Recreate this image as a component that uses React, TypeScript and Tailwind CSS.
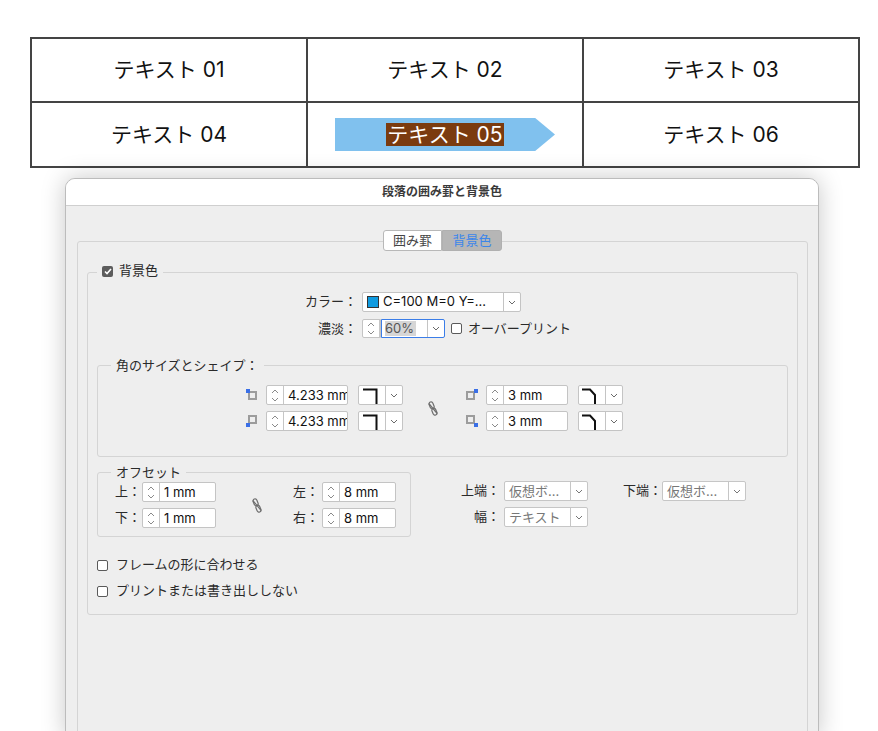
import React from 'react';

const ui = "font-['Inter','Noto_Sans_CJK_JP',sans-serif]";

function Chevron({ color = '#6a6a6a' }: { color?: string }) {
    return (
        <svg width="8" height="5" viewBox="0 0 8 5">
            <path d="M1 1l3 3 3-3" fill="none" stroke={color} strokeWidth="1" />
        </svg>
    );
}

function Spinner() {
    return (
        <div className="w-[17px] h-full shrink-0 border-r border-[#c6c6c6] flex flex-col items-center justify-center gap-[3px]">
            <svg width="8" height="5" viewBox="0 0 8 5">
                <path d="M1 4l3-3 3 3" fill="none" stroke="#8a8a8a" strokeWidth="1" />
            </svg>
            <svg width="8" height="5" viewBox="0 0 8 5">
                <path d="M1 1l3 3 3-3" fill="none" stroke="#8a8a8a" strokeWidth="1" />
            </svg>
        </div>
    );
}

function Check({ checked }: { checked?: boolean }) {
    if (checked) {
        return (
            <span className="w-[11px] h-[11px] shrink-0 rounded-[2px] bg-[#5c5c5c] flex items-center justify-center">
                <svg width="8" height="7" viewBox="0 0 8 7">
                    <path d="M1 3.5l2 2 4-4.5" fill="none" stroke="white" strokeWidth="1.6" />
                </svg>
            </span>
        );
    }
    return <span className="block w-[11px] h-[11px] shrink-0 rounded-[2px] border border-[#5a5a5a] bg-white" />;
}

function NumField({ value, w }: { value: string; w: string }) {
    return (
        <div className={`flex h-[20px] ${w} shrink-0 border border-[#c4c4c4] rounded-[2px] bg-white overflow-hidden`}>
            <Spinner />
            <div className="pl-[4px] text-[13px] leading-[18px] text-[#111] whitespace-nowrap overflow-hidden">{value}</div>
        </div>
    );
}

function Dropdown({ text, disabled }: { text: string; disabled?: boolean }) {
    return (
        <div className="flex h-[20px] w-[84px] shrink-0 border border-[#c6c6c6] rounded-[2px] bg-white">
            <div className={`flex-1 pl-[4px] text-[13px] leading-[18px] whitespace-nowrap overflow-hidden ${disabled ? 'text-[#777]' : 'text-[#111]'}`}>{text}</div>
            <div className="w-[17px] shrink-0 border-l border-[#c6c6c6] flex items-center justify-center">
                <Chevron color="#777" />
            </div>
        </div>
    );
}

function ShapeSelect({ bevel }: { bevel?: boolean }) {
    return (
        <div className="flex h-[20px] w-[45px] shrink-0 border border-[#c4c4c4] rounded-[2px] bg-white">
            <div className="w-[27px] border-r border-[#c4c4c4]">
                <svg width="27" height="18" viewBox="0 0 27 18">
                    {bevel ? (
                        <path d="M3 3.5H11L16 9V19" fill="none" stroke="#111" strokeWidth="2" />
                    ) : (
                        <path d="M4 3.5H17.5V19" fill="none" stroke="#111" strokeWidth="2" />
                    )}
                </svg>
            </div>
            <div className="flex-1 flex items-center justify-center">
                <Chevron />
            </div>
        </div>
    );
}

function CornerIcon({ corner }: { corner: 'tl' | 'bl' | 'tr' | 'br' }) {
    const gray = { tl: [3, 3], bl: [3, 1], tr: [1, 3], br: [1, 1] }[corner];
    const blue = { tl: [0, 0], bl: [0, 8], tr: [8, 0], br: [8, 8] }[corner];
    return (
        <svg width="12" height="12" viewBox="0 0 12 12" className="shrink-0">
            <rect x={gray[0]} y={gray[1]} width="7" height="7" fill="none" stroke="#9c9c9c" strokeWidth="2" />
            <rect x={blue[0]} y={blue[1]} width="4" height="4" fill="#3a6fe6" />
        </svg>
    );
}

function LinkBroken() {
    return (
        <svg width="10" height="15" viewBox="0 0 10 15" className="shrink-0">
            <g fill="none" stroke="#6e6e6e" strokeWidth="1.2">
                <rect x="1.6" y="0.8" width="4" height="7" rx="2" transform="rotate(-22 3.6 4.3)" />
                <rect x="4.4" y="7.2" width="4" height="7" rx="2" transform="rotate(-22 6.4 10.7)" />
                <path d="M0.8 2.5L9.2 12.5" />
            </g>
        </svg>
    );
}

function CornerRow({ icon, value, bevel }: { icon: 'tl' | 'bl' | 'tr' | 'br'; value: string; bevel?: boolean }) {
    return (
        <div className="flex items-center">
            <CornerIcon corner={icon} />
            <div className="ml-[8px]">
                <NumField value={value} w="w-[82px]" />
            </div>
            <div className="ml-[10px]">
                <ShapeSelect bevel={bevel} />
            </div>
        </div>
    );
}

function OffsetRow({ a, b }: { a: string; b: string }) {
    return (
        <div className="flex items-center h-[20px]">
            <span className="w-[27px]">{a}</span>
            <NumField value="1 mm" w="w-[74px]" />
            <span className="ml-[77px] w-[29px]">{b}</span>
            <NumField value="8 mm" w="w-[74px]" />
        </div>
    );
}

export default function App() {
    const cells = ['テキスト 01', 'テキスト 02', 'テキスト 03', 'テキスト 04', null, 'テキスト 06'];

    return (
        <div className={`w-[878px] h-[731px] overflow-hidden bg-white ${ui}`}>
            {/* table */}
            <div className="pt-[37px] pl-[30px]">
                <table className="border-collapse w-[830px] table-fixed">
                    <tbody>
                        {[0, 1].map((r) => (
                            <tr key={r} className={r === 0 ? 'h-[64px]' : 'h-[65px]'}>
                                {cells.slice(r * 3, r * 3 + 3).map((c, i) => (
                                    <td key={i} className="border-2 border-[#444] text-center text-[21px] text-[#111] p-0">
                                        {c ?? (
                                            <div className="mx-auto w-[220px] h-[33px] bg-[#80c1ee] [clip-path:polygon(0_0,91%_0,100%_50%,91%_100%,0_100%)] flex items-center justify-center">
                                                <span className="bg-[#7b3b0f] text-white leading-[23px] px-[1px]">テキスト 05</span>
                                            </div>
                                        )}
                                    </td>
                                ))}
                            </tr>
                        ))}
                    </tbody>
                </table>
            </div>

            {/* dialog */}
            <div className="ml-[65px] mt-[10px] w-[754px] h-[560px] rounded-t-[10px] border border-[#bcbcbc] bg-[#eeeeee] shadow-[0_0_24px_rgba(0,0,0,0.22)] overflow-hidden text-[13px] text-[#2a2a2a]">
                <div className="h-[27px] bg-white border-b border-[#cfcfcf] flex items-center justify-center text-[12px] font-bold text-[#3a3a3a]">
                    段落の囲み罫と背景色
                </div>
                <div className="pt-[35px] pl-[11px] pr-[10px]">
                    <div className="border border-[#d4d4d4] rounded-[3px] h-[600px]">
                        {/* tabs */}
                        <div className="-mt-[12px] flex justify-center">
                            <div className="flex h-[21px] text-[13px] leading-[19px]">
                                <div className="w-[59px] bg-white border border-[#b8b8b8] rounded-l-[3px] text-center text-[#444]">囲み罫</div>
                                <div className="w-[60px] bg-[#b6b6b6] border border-[#b0b0b0] rounded-r-[3px] text-center text-[#3d86ea]">背景色</div>
                            </div>
                        </div>

                        {/* background colour group */}
                        <div className="mt-[21px] mx-[9px] border border-[#d4d4d4] rounded-[3px] pb-[16px]">
                            <div className="-mt-[9px] ml-[9px] w-fit px-[5px] bg-[#eeeeee] flex items-center gap-[6px] h-[14px]">
                                <Check checked />
                                <span>背景色</span>
                            </div>

                            <div className="mt-[14px] flex items-center h-[20px]">
                                <span className="w-[274px] pr-[5px] text-right">カラー：</span>
                                <div className="flex h-[20px] w-[159px] border border-[#c4c4c4] rounded-[2px] bg-white">
                                    <div className="flex-1 flex items-center pl-[4px] gap-[4px] overflow-hidden">
                                        <span className="w-[12px] h-[12px] shrink-0 bg-[#109be0] border border-[#333]" />
                                        <span className="text-[13px] text-[#111] whitespace-nowrap">C=100 M=0 Y=...</span>
                                    </div>
                                    <div className="w-[17px] shrink-0 border-l border-[#c4c4c4] flex items-center justify-center">
                                        <Chevron />
                                    </div>
                                </div>
                            </div>

                            <div className="mt-[7px] flex items-center h-[19px]">
                                <span className="w-[274px] pr-[5px] text-right">濃淡：</span>
                                <div className="flex h-[19px] w-[19px] border border-[#c4c4c4] rounded-l-[2px] bg-white">
                                    <Spinner />
                                </div>
                                <div className="flex h-[19px] w-[64px] border border-[#3b7de8] rounded-r-[2px] bg-white">
                                    <div className="flex-1 flex items-center pl-[3px]">
                                        <span className="bg-[#d6d6d6] text-[#555] leading-[15px] pr-[2px]">60%</span>
                                    </div>
                                    <div className="w-[17px] border-l border-[#c4c4c4] flex items-center justify-center">
                                        <Chevron />
                                    </div>
                                </div>
                                <span className="ml-[6px]">
                                    <Check />
                                </span>
                                <span className="ml-[6px]">オーバープリント</span>
                            </div>

                            {/* corners */}
                            <div className="mt-[27px] mx-[9px] border border-[#d4d4d4] rounded-[3px] pb-[25px]">
                                <div className="-mt-[8px] ml-[13px] w-fit px-[5px] bg-[#eeeeee] h-[14px] leading-[14px]">角のサイズとシェイプ：</div>
                                <div className="mt-[13px] ml-[148px] flex items-center">
                                    <div className="flex flex-col gap-[6px]">
                                        <CornerRow icon="tl" value="4.233 mm" />
                                        <CornerRow icon="bl" value="4.233 mm" />
                                    </div>
                                    <div className="ml-[25px]">
                                        <LinkBroken />
                                    </div>
                                    <div className="ml-[28px] flex flex-col gap-[6px]">
                                        <CornerRow icon="tr" value="3 mm" bevel />
                                        <CornerRow icon="br" value="3 mm" bevel />
                                    </div>
                                </div>
                            </div>

                            {/* offsets */}
                            <div className="mt-[15px] flex">
                                <div className="ml-[9px] w-[314px] border border-[#d4d4d4] rounded-[3px] pb-[8px] relative">
                                    <div className="-mt-[8px] ml-[13px] w-fit px-[5px] bg-[#eeeeee] h-[14px] leading-[14px]">オフセット</div>
                                    <div className="mt-[3px] pl-[17px] flex flex-col gap-[6px]">
                                        <OffsetRow a="上：" b="左：" />
                                        <OffsetRow a="下：" b="右：" />
                                    </div>
                                    <div className="absolute left-[154px] top-[25px]">
                                        <LinkBroken />
                                    </div>
                                </div>
                                <div className="pt-[9px] flex flex-col gap-[6px]">
                                    <div className="flex items-center h-[20px]">
                                        <span className="ml-[49px] w-[40px] text-right whitespace-nowrap">上端：</span>
                                        <span className="ml-[4px]">
                                            <Dropdown text="仮想ボ..." disabled />
                                        </span>
                                        <span className="ml-[35px] w-[39px] whitespace-nowrap">下端：</span>
                                        <Dropdown text="仮想ボ..." disabled />
                                    </div>
                                    <div className="flex items-center h-[20px]">
                                        <span className="ml-[49px] w-[40px] text-right whitespace-nowrap">幅：</span>
                                        <span className="ml-[4px]">
                                            <Dropdown text="テキスト" disabled />
                                        </span>
                                    </div>
                                </div>
                            </div>

                            <div className="mt-[21px] ml-[9px] flex items-center gap-[8px] h-[14px]">
                                <Check />
                                <span>フレームの形に合わせる</span>
                            </div>
                            <div className="mt-[12px] ml-[9px] flex items-center gap-[8px] h-[14px]">
                                <Check />
                                <span>プリントまたは書き出ししない</span>
                            </div>
                        </div>
                    </div>
                </div>
            </div>
        </div>
    );
}
